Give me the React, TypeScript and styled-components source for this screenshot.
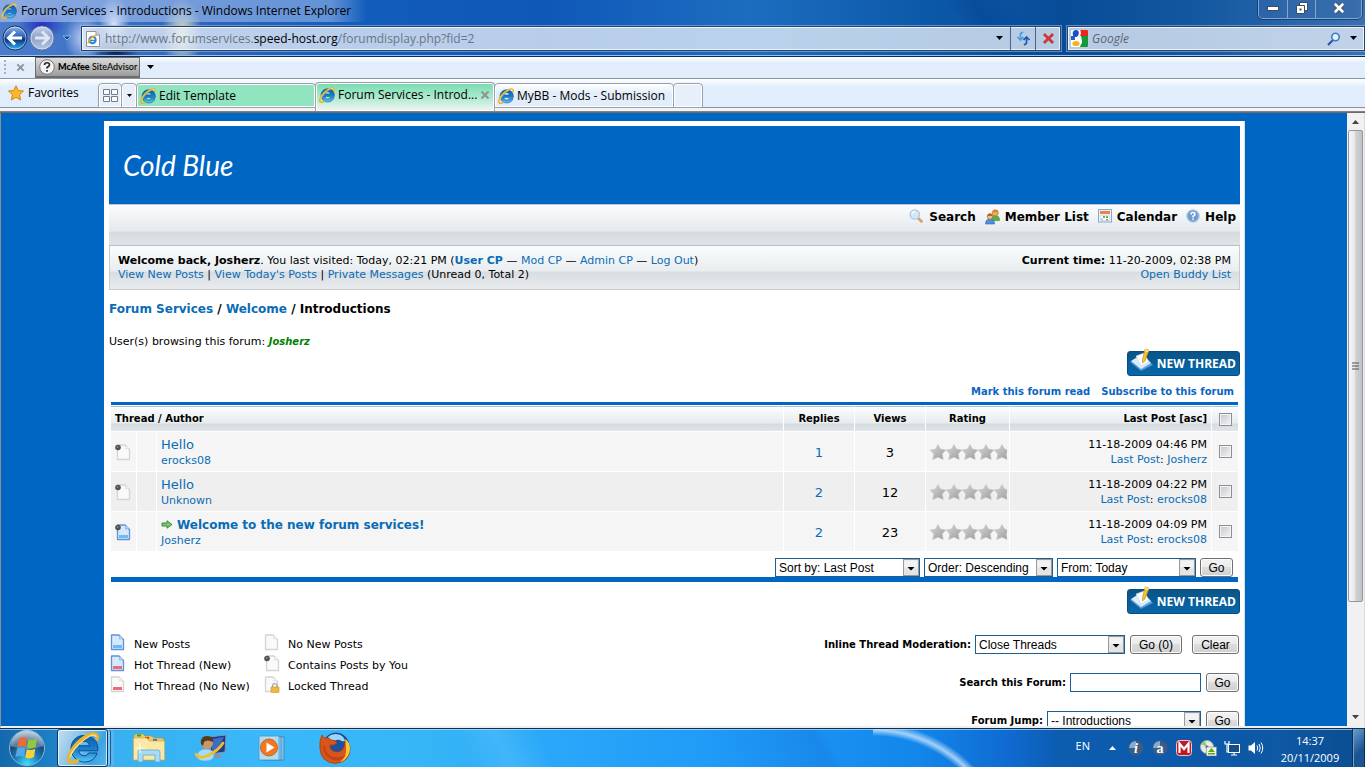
import React, { ReactNode } from "react";
import styled, { createGlobalStyle, css } from "styled-components";

const verdana = `"DejaVu Sans", Verdana, sans-serif`;
const segoe = `"Open Sans", "Noto Sans", "Segoe UI", sans-serif`;
const arial = `"Liberation Sans", Arial, sans-serif`;
const link = "#0a6cb5";
const brand = "#0066c4";

const Global = createGlobalStyle`
  * { box-sizing: border-box; }
  body { margin: 0; overflow: hidden; background: ${brand}; }
  button, input, select { font: inherit; color: inherit; margin: 0; }
  svg { display: block; flex: none; }
`;

/* ---------- browser window ---------- */

const Desktop = styled.div`
  height: 100vh;
  display: flex;
  flex-direction: column;
  overflow: hidden;
  font: 12px/16px ${segoe};
  color: #000;
`;

const Glass = styled.header`
  flex: none;
  border-bottom: 1px solid #0b2a5c;
  background:
    radial-gradient(ellipse 24px 14px at 42px 25px, rgba(30, 40, 190, 0.9), transparent),
    radial-gradient(ellipse 20px 24px at 84px 38px, rgba(225, 232, 255, 0.8), transparent),
    radial-gradient(ellipse 16px 26px at 114px 22px, rgba(240, 244, 255, 0.9), transparent),
    radial-gradient(ellipse 24px 12px at 116px 51px, rgba(5, 16, 50, 0.95), transparent),
    radial-gradient(ellipse 20px 36px at 182px 34px, rgba(245, 242, 190, 0.95), transparent),
    linear-gradient(52deg, transparent 70%, rgba(0, 60, 140, 0.3) 72%, transparent 75%),
    linear-gradient(90deg, #4c7cca 0, #2c66c0 200px, #125cbc 360px, #1058b8 40%, #1c6dc0 55%, #0c58a8 68%, #084c98 78%, #1458a0 88%, #3a70b0 100%);
`;

const TitleBar = styled.div`
  display: flex;
  align-items: center;
  justify-content: space-between;
  height: 22px;
`;

const WindowTitle = styled.div`
  display: flex;
  align-items: center;
  gap: 4px;
  height: 22px;
  padding: 0 16px 0 1px;
  background: linear-gradient(90deg, rgba(190, 208, 245, 0.55), rgba(160, 190, 235, 0.55) 90%, transparent);
`;

const Caption = styled.div`
  display: flex;
  align-self: flex-start;
  height: 19px;
  margin-right: 3px;
  border: 1px solid #7fa7d2;
  border-top: 0;
  border-radius: 0 0 5px 5px;
  box-shadow: 0 0 0 1px rgba(10, 40, 90, 0.6);
  overflow: hidden;
`;

const CaptionButton = styled.button<{ $wide?: boolean }>`
  width: ${(p) => (p.$wide ? 46 : 28)}px;
  display: grid;
  place-items: center;
  padding: 0 0 3px;
  border: 0;
  background: rgba(60, 110, 170, 0.35);
  & + & { border-left: 1px solid #7fa7d2; }
`;

const NavBar = styled.div`
  display: flex;
  align-items: center;
  height: 34px;
  padding: 0 0 1px 2px;
  border-bottom: 1px solid #9cc0e8;
`;

const Bare = styled.button`
  display: grid;
  place-items: center;
  padding: 0;
  border: 0;
  background: none;
`;

const RecentButton = styled(Bare)`
  width: 22px;
`;

const Field = styled.div<{ $search?: boolean }>`
  flex: ${(p) => (p.$search ? "0 1 298px" : "1 1 0")};
  height: 25px;
  margin-top: 1px;
  margin-left: ${(p) => (p.$search ? 6 : 3)}px;
  display: flex;
  align-items: center;
  border: 1px solid #24436f;
  outline: 1px solid rgba(150, 185, 225, 0.6);
  box-shadow: inset 0 0 0 1px rgba(255, 255, 255, 0.75);
  background: rgba(226, 235, 246, 0.8);
`;

const FieldIcon = styled.span`
  padding: 0 4px 0 3px;
`;

const Address = styled.div`
  flex: 1;
  color: #6b7684;
  b { color: #000; font-weight: 400; }
`;

const SearchBox = styled.input`
  flex: 1;
  min-width: 0;
  padding: 0;
  border: 0;
  background: none;
  font-style: italic;
  &::placeholder { color: #5d6672; opacity: 1; }
`;

const FieldButton = styled(Bare)<{ $divided?: boolean }>`
  width: ${(p) => (p.$divided ? 25 : 20)}px;
  height: 23px;
  border-left: ${(p) => (p.$divided ? "1px solid #4a6488" : "0")};
`;

const ToolBar = styled.div`
  flex: none;
  height: 22px;
  display: flex;
  align-items: stretch;
  padding-left: 4px;
  border-bottom: 1px solid #8a93a2;
  background: linear-gradient(#fff, #e1edfa 30%);
`;

const Grip = styled.span`
  width: 2px;
  margin: 3px 0 2px;
  background: repeating-linear-gradient(#a9b0ba 0 2px, transparent 2px 4px);
`;

const ToolClose = styled(Bare)`
  width: 29px;
`;

const Advisor = styled.button`
  display: flex;
  align-items: center;
  gap: 3px;
  width: 105px;
  padding: 0 0 0 3px;
  border: 1px solid #6d6d6d;
  border-bottom-width: 2px;
  background: linear-gradient(#dcdcdc, #9b9b9b);
  font: 500 9px/12px Lato, "Open Sans", sans-serif;
  white-space: nowrap;
  b { font-weight: 900; }
`;

const TabStrip = styled.div`
  flex: none;
  display: flex;
  height: 34px;
  align-items: flex-start;
  padding-top: 3px;
  background: linear-gradient(#fff 0, #e1edfa 8px, #e1edfa 28px, #8a93a2 28px, #8a93a2 29px, #f0f2f5 29px, #f4f4f4 32px, #8e8e8e 32px, #5e5e5e 34px);
`;

const Favorites = styled.button`
  display: flex;
  align-items: center;
  gap: 4px;
  width: 98px;
  height: 22px;
  padding: 0 0 0 8px;
  border: 0;
  background: none;
`;

const tabFrame = css`
  border: 1px solid #98a0ac;
  border-radius: 4px 4px 0 0;
  box-shadow: inset 0 0 0 1px #fff;
`;

const QuickTab = styled.button<{ $width: number }>`
  ${tabFrame}
  width: ${(p) => p.$width}px;
  height: 25px;
  margin-top: 1px;
  margin-right: -1px;
  padding: 0;
  display: grid;
  place-items: center;
  background: #e6effa;
`;

const Tab = styled.div<{ $active?: boolean; $tone: string }>`
  ${tabFrame}
  display: flex;
  align-items: center;
  gap: 3px;
  width: 180px;
  height: ${(p) => (p.$active ? 29 : 25)}px;
  margin-top: ${(p) => (p.$active ? 0 : 1)}px;
  margin-right: -1px;
  padding: ${(p) => (p.$active ? "0 7px 4px 3px" : "0 4px 0 3px")};
  border-bottom-width: ${(p) => (p.$active ? 0 : 1)}px;
  background: ${(p) => p.$tone};
  white-space: nowrap;
  span { flex: 1; }
`;

/* ---------- page viewport ---------- */

const Viewport = styled.div`
  flex: 1;
  min-height: 0;
  display: flex;
  border-left: 1px solid #8e8e8e;
  border-right: 1px solid #d8dce4;
  border-bottom: 2px solid #efefef;
  background: ${brand};
`;

const Page = styled.main`
  flex: 1;
  min-width: 0;
  overflow: hidden;
  padding: 8px 102px 0 103px;
  background: ${brand};
  font: 11px/14px ${verdana};
`;

const Container = styled.div`
  padding: 5px 4px 5px 5px;
  border-right: 1px solid #ddd;
  background: #fff;
`;

const Banner = styled.h1`
  height: 78px;
  margin: 0;
  padding: 0 14px;
  display: flex;
  align-items: center;
  background: ${brand};
  color: #fff;
  font: italic 28px/36px Lato, "Open Sans", sans-serif;
`;

const A = styled.a`
  color: ${link};
  text-decoration: none;
`;

const MenuBar = styled.nav`
  display: flex;
  justify-content: flex-end;
  gap: 9px;
  height: 42px;
  padding: 4px 4px 0 0;
  border-top: 1px solid #b9c6d2;
  border-bottom: 1px solid #b5bfc9;
  background: linear-gradient(#fbfcfd, #e6eaed 26px, #d6dbe0 27px, #e0e4e9);
`;

const MenuLink = styled.a`
  display: flex;
  align-items: flex-start;
  gap: 5px;
  color: #000;
  font-weight: 700;
  font-size: 12px;
  line-height: 16px;
  text-decoration: none;
`;

const Welcome = styled.section`
  display: flex;
  justify-content: space-between;
  padding: 8px 8px 7px;
  border: 1px solid #c8cbce;
  border-top: 0;
  background: linear-gradient(#fafcfd, #e9edef 25px, #d8dde1 26px, #e9ecef);
  p { margin: 0; }
`;

const Right = styled.div`
  text-align: right;
`;

const Crumbs = styled.nav`
  margin-top: 11px;
  font-size: 12px;
  font-weight: 700;
  line-height: 16px;
`;

const Browsing = styled.p`
  margin: 18px 0 0;
  i { color: #008000; font-weight: 700; font-size: 10px; }
`;

const ActionRow = styled.div<{ $top: number }>`
  display: flex;
  justify-content: flex-end;
  padding-top: ${(p) => p.$top}px;
`;

const NewThreadLink = styled.a`
  position: relative;
  display: flex;
  align-items: center;
  justify-content: flex-end;
  width: 113px;
  height: 25px;
  margin: 2px 0 1px;
  padding-right: 3px;
  border-radius: 3px;
  background: linear-gradient(#0a5486, #0668ac);
  border: 1px solid #0b4c7c;
  color: #fff;
  font: 700 12px/16px "Open Sans", Lato, sans-serif;
  text-decoration: none;
  svg { position: absolute; left: 1px; top: -4px; }
`;

const ForumLinks = styled.div`
  display: flex;
  justify-content: flex-end;
  gap: 11px;
  padding: 8px 6px 3px 0;
  font-weight: 700;
  font-size: 10px;
  a { color: #0a66c2; }
`;

const ThreadBox = styled.div`
  margin: 0 2px;
  border-top: 3px solid ${brand};
  border-bottom: 5px solid ${brand};
`;

const Threads = styled.table`
  width: 100%;
  margin-top: 1px;
  border-spacing: 0;
  table-layout: fixed;
`;

const Th = styled.th<{ $align?: string }>`
  height: 26px;
  padding: 0 4px;
  font-size: 10px;
  text-align: ${(p) => p.$align || "center"};
  border-top: 1px solid #b4c0cf;
  border-right: 1px solid #fff;
  border-bottom: 1px solid #fff;
  background: linear-gradient(#fafcfd, #e8ecee 16px, #d5dce0 17px, #e0e5ea);
  &:last-child { border-right: 0; padding: 0; }
`;

const Td = styled.td<{ $align?: string; $big?: boolean }>`
  height: 40px;
  padding: 1px 4px 0;
  text-align: ${(p) => p.$align || "center"};
  font-size: ${(p) => (p.$big ? 13 : 11)}px;
  line-height: 15px;
  border-right: 1px solid #fff;
  border-bottom: 1px solid #fff;
  &:last-child { border-right: 0; padding: 0; }
`;

const Tr = styled.tr<{ $alt: boolean }>`
  background: ${(p) => (p.$alt ? "#efefef" : "#f5f5f5")};
`;

const Subject = styled.div<{ $unread: boolean }>`
  display: flex;
  align-items: center;
  gap: 4px;
  font-size: ${(p) => (p.$unread ? 12 : 13)}px;
  line-height: 16px;
  font-weight: ${(p) => (p.$unread ? 700 : 400)};
`;

const Tick = styled.input`
  appearance: none;
  display: block;
  width: 13px;
  height: 13px;
  margin: 0 auto;
  border: 1px solid #8e8f8f;
  background: linear-gradient(135deg, #c3c8ce, #f5f6f7);
  background-clip: content-box;
  padding: 1px;
  box-shadow: inset 0 0 0 1px #f4f4f4;
`;

const SortBar = styled.form`
  display: flex;
  justify-content: flex-end;
  align-items: flex-end;
  gap: 4px;
  height: 25px;
  padding-right: 5px;
`;

const SelectBox = styled.span<{ $width: number }>`
  position: relative;
  display: inline-flex;
  width: ${(p) => p.$width}px;
  height: 19px;
  svg { position: absolute; right: 1px; top: 1px; pointer-events: none; }
`;

const NativeSelect = styled.select`
  appearance: none;
  width: 100%;
  padding: 0 18px 0 3px;
  border: 1px solid #1f5f8f;
  border-radius: 0;
  background: #fff;
  font: 12px/16px ${arial};
`;

const TextInput = styled.input`
  width: 131px;
  height: 19px;
  padding: 0 3px;
  border: 1px solid #1f5f8f;
  background: #fff;
  font: 12px/16px ${arial};
`;

const Push = styled.button<{ $width: number; $gap?: number }>`
  width: ${(p) => p.$width}px;
  height: 19px;
  margin-left: ${(p) => p.$gap || 0}px;
  padding: 1px 0 0;
  border: 1px solid #707070;
  border-radius: 3px;
  box-shadow: inset 0 0 0 1px #fcfcfc;
  background: linear-gradient(#f2f2f2, #ebebeb 50%, #dddddd 50%, #cfcfcf);
  font: 12px/14px ${arial};
`;

const Bottom = styled.div`
  display: flex;
  justify-content: space-between;
  align-items: flex-start;
  padding: 19px 1px 30px 1px;
`;

const Legend = styled.ul`
  display: grid;
  grid-template-columns: 154px auto;
  margin: 0;
  padding: 0;
  list-style: none;
`;

const LegendItem = styled.li`
  display: flex;
  align-items: flex-start;
  gap: 8px;
  height: 21px;
  span { margin-top: 4px; }
`;

const Tools = styled.div`
  display: flex;
  flex-direction: column;
  align-items: flex-end;
  gap: 19px;
  padding-top: 1px;
`;

const ToolForm = styled.form`
  display: flex;
  align-items: center;
  gap: 5px;
  label { font-weight: 700; font-size: 10px; margin-right: -1px; }
`;

const Scroll = styled.div`
  flex: none;
  width: 17px;
  display: flex;
  flex-direction: column;
  background: #f1f1f1;
`;

const ScrollArrow = styled(Bare)`
  height: 17px;
`;

const Thumb = styled.div`
  flex: 0 0 77%;
  display: grid;
  place-items: center;
  margin: 0 1px;
  border: 1px solid #979797;
  border-radius: 2px;
  background: linear-gradient(90deg, #f5f5f5, #e9e9eb 45%, #d2d3d6 50%, #c0c1c6);
`;

const Rest = styled.div`
  flex: 1;
`;

/* ---------- taskbar ---------- */

const TaskBar = styled.footer`
  flex: none;
  display: flex;
  align-items: stretch;
  height: 39px;
  border-top: 1px solid #12304e;
  box-shadow: inset 0 1px 0 rgba(190, 225, 255, 0.7);
  background:
    radial-gradient(circle at 0 134px, transparent 127px, rgba(200, 228, 255, 0.8) 133px, transparent 140px) 64.500% 0 / 120px 39px no-repeat,
    linear-gradient(62deg, transparent 34%, rgba(120, 210, 255, 0.25) 37%, transparent 40%, transparent 52%, rgba(20, 110, 210, 0.25) 60%, transparent 61%),
    linear-gradient(90deg, #1468ac 0, #1f82c8 56px, #36b0f0 110px, #3ab8fa 260px, #36b6f6 420px, #2aa6fa 560px, #1c96f6 780px, #1286ea 920px, #0f6ad0 1010px, #0c5cb0 1060px, #0e58a4 1280px, #0a4c90 100%);
  background-position: calc(100% - 372px) 0, 0 0, 0 0;
`;

const StartButton = styled(Bare)`
  width: 54px;
`;

const RunningApp = styled.button`
  display: grid;
  place-items: center;
  width: 51px;
  margin: 0 10px 0 3px;
  padding: 0;
  border: 1px solid #0b3a66;
  border-radius: 3px;
  box-shadow: inset 0 0 0 1px rgba(255, 255, 255, 0.7), 3px 0 0 -1px #7cc8f4, 4px 0 0 -1px #1b5c92, 7px 0 0 -1px #58b4ec;
  background: linear-gradient(115deg, #c4dff2, #7dbde6 45%, #3fa3e0 75%, #58b6ee);
`;

const PinnedApp = styled(Bare)`
  width: 62px;
`;

const Tray = styled.div`
  margin-left: auto;
  display: flex;
  align-items: center;
  color: #fff;
`;

const Lang = styled.span`
  margin: -4px 10px 0 0;
  font-size: 11px;
`;

const TrayIcon = styled(Bare)<{ $width?: number }>`
  width: ${(p) => p.$width || 24}px;
`;

const Clock = styled.time`
  width: 84px;
  padding-top: 2px;
  text-align: center;
  font-size: 11px;
  line-height: 17px;
`;

const PeekButton = styled.button`
  width: 13px;
  align-self: stretch;
  padding: 0;
  border: 1px solid #0b2f58;
  border-width: 0 1px;
  box-shadow: inset 1px 0 0 #6d9fd0;
  background: linear-gradient(135deg, #6f9fcc, #1c5492 60%);
`;

/* ---------- icons ---------- */

function IeLogo({ size = 16 }: { size?: number }) {
  return (
    <svg width={size} height={size} viewBox="0 0 32 32" aria-hidden="true">
      <defs>
        <linearGradient id="ie-blue" x1="0" y1="0" x2="0" y2="1">
          <stop offset="0" stopColor="#0d5cb0" />
          <stop offset="0.6" stopColor="#1c86d4" />
          <stop offset="1" stopColor="#58c8f8" />
        </linearGradient>
      </defs>
      <path
        d="M17 3.500C9 3.500 4 9.500 4 16.500C4 24 10 30 17.500 30C24 30 28.500 26.500 30 21H21.500C20.500 23 19.500 23.800 17.500 23.800C14 23.800 12 21.500 11.800 18.800H30.700C31.500 9.500 26 3.500 17 3.500ZM12 13.800C12.500 11 14.600 9.300 17.300 9.300C20.200 9.300 22.200 11 22.600 13.800Z"
        fill="url(#ie-blue)"
        stroke="#0b4a8c"
        strokeWidth="1"
      />
      <path d="M30 7C31.500 3 28 0.800 23 2.500C13 6 4 17 1.800 25C0.500 31 5 32 10.500 28.500" fill="none" stroke="#f0b422" strokeWidth="3.200" strokeLinecap="round" />
      <path d="M29 5C28.500 2.800 26 2.700 23 4C15 8 6 17 3 25" fill="none" stroke="#ffe58a" strokeWidth="1.200" />
    </svg>
  );
}

function Arrow({ color = "#000" }: { color?: string }) {
  return (
    <svg width="8" height="5" viewBox="0 0 8 5" aria-hidden="true">
      <path d="M0 0H7L3.500 4Z" fill={color} />
    </svg>
  );
}

function RoundArrow({ back }: { back?: boolean }) {
  return (
    <svg width={back ? 26 : 28} height="26" viewBox="0 0 26 26" aria-hidden="true">
      <defs>
        <linearGradient id="nav-back" x1="0" y1="0" x2="0" y2="1">
          <stop offset="0" stopColor="#8fb8e8" />
          <stop offset="0.450" stopColor="#2a62b8" />
          <stop offset="0.550" stopColor="#0c2f80" />
          <stop offset="1" stopColor="#35b8f8" />
        </linearGradient>
        <linearGradient id="nav-fwd" x1="0" y1="0" x2="0" y2="1">
          <stop offset="0" stopColor="#c4d0e8" />
          <stop offset="0.500" stopColor="#8ea4cc" />
          <stop offset="1" stopColor="#b4c4de" />
        </linearGradient>
      </defs>
      <circle cx="13" cy="13" r="12" fill={back ? "url(#nav-back)" : "url(#nav-fwd)"} stroke={back ? "#16305e" : "#5f76a0"} />
      <circle cx="13" cy="13" r="11" fill="none" stroke="#fff" strokeOpacity="0.500" />
      <path
        d={back ? "M13 6.500L6.500 13L13 19.500M7 13H20" : "M13 6.500L19.500 13L13 19.500M19 13H6"}
        fill="none"
        stroke={back ? "#fff" : "#dfe6f2"}
        strokeWidth="3"
      />
    </svg>
  );
}

function PageIe() {
  return (
    <svg width="16" height="18" viewBox="0 0 16 18" aria-hidden="true">
      <path d="M1.500 1.500H11L14.500 5V16.500H1.500Z" fill="#fff" stroke="#8b93a0" />
      <path d="M11 1.500V5H14.500" fill="#dde3ec" stroke="#8b93a0" />
      <circle cx="7.500" cy="10" r="3.200" fill="none" stroke="#2a86d8" strokeWidth="2" />
      <path d="M5 10.500H11" stroke="#2a86d8" strokeWidth="1.500" />
      <path d="M12 5.500C9 5 4 9 3 13.500" stroke="#f0b422" strokeWidth="1.500" fill="none" />
    </svg>
  );
}

function GoogleMark() {
  return (
    <svg width="17" height="17" viewBox="0 0 17 17" aria-hidden="true">
      <rect width="17" height="17" rx="1" fill="#fff" />
      <path d="M9 0H16Q17 0 17 1V6H9Z" fill="#e8261c" />
      <path d="M10 6H17V16Q17 17 16 17H9L11 11Z" fill="#149a3c" />
      <path d="M0 6H4V10H0Z" fill="#2a58c8" />
      <ellipse cx="5" cy="3.500" rx="3.300" ry="3.500" fill="#1d4fc0" />
      <path d="M8 0C10 3 8 7 6 8C10 9 11 12 9 14" fill="none" stroke="#fff" strokeWidth="2" />
      <ellipse cx="5" cy="13.500" rx="3.600" ry="2.600" fill="#f4b41a" />
    </svg>
  );
}

function Cross({ size = 10, color = "#8e949c", edge }: { size?: number; color?: string; edge?: string }) {
  return (
    <svg width={size} height={size} viewBox="0 0 10 10" aria-hidden="true">
      {edge && <path d="M1.500 1.500L8.500 8.500M8.500 1.500L1.500 8.500" stroke={edge} strokeWidth="3.600" />}
      <path d="M1.500 1.500L8.500 8.500M8.500 1.500L1.500 8.500" stroke={color} strokeWidth="2.200" />
    </svg>
  );
}

type Tone = "blue" | "grey";
function Doc({ tone, band, dot, lock }: { tone: Tone; band?: string; dot?: boolean; lock?: boolean }) {
  const edge = tone === "blue" ? "#5f93dc" : "#d4d4d4";
  return (
    <svg width="16" height="17" viewBox="0 0 16 17" aria-hidden="true">
      <path d="M1.500 1H9L13.500 5.500V15.500H1.500Z" transform={dot ? "translate(1 0)" : undefined} fill={tone === "blue" ? "#d6e8fc" : "#fafafa"} stroke={edge} strokeWidth="1.300" strokeLinejoin="round" />
      <path d="M9 1Q11 3 9.500 5Q11.500 4 13.500 5.500" transform={dot ? "translate(1 0)" : undefined} fill="#fff" stroke={edge} strokeWidth="0.700" />
      {band && <rect x={dot ? 4 : 3} y="11" width="9" height="3" fill={band} />}
      {dot && <circle cx="3" cy="3.500" r="2.800" fill="#505050" />}
      {dot && <circle cx="2.600" cy="3" r="1" fill="#888" />}
      {lock && (
        <>
          <path d="M8.500 12V9.500A2.300 2.300 0 0 1 13 9.500V12" fill="none" stroke="#a8a8a8" strokeWidth="1.300" />
          <rect x="7" y="11" width="8" height="5.500" rx="0.500" fill="#f0b840" stroke="#c89028" strokeWidth="0.600" />
        </>
      )}
    </svg>
  );
}

function Stars() {
  const star = "M8 0.500L10.500 5L15.800 6L12.200 10L13.300 15.500L8 13.300L2.700 15.500L3.800 10L0.200 6L5.500 5Z";
  return (
    <svg width="77" height="16" viewBox="0 0 77 16" role="img" aria-label="Not rated">
      <defs>
        <linearGradient id="star-fill" x1="0" y1="0" x2="1" y2="1">
          <stop offset="0" stopColor="#d6d6d6" />
          <stop offset="1" stopColor="#9c9c9c" />
        </linearGradient>
      </defs>
      {[0, 16, 32, 48, 64].map((x) => (
        <path key={x} d={star} transform={`translate(${x} 0)`} fill="url(#star-fill)" stroke="#c0c0c0" strokeWidth="0.500" />
      ))}
    </svg>
  );
}

function SearchGlyph() {
  return (
    <svg width="15" height="15" viewBox="0 0 15 15" aria-hidden="true">
      <path d="M9 9L12.500 12.500" stroke="#d8a060" strokeWidth="2.600" strokeLinecap="round" />
      <circle cx="5.800" cy="5.500" r="4.600" fill="#d2e8fa" stroke="#b4c6dc" strokeWidth="1.400" />
      <path d="M3 5A3 3 0 0 1 6 2.600" stroke="#fff" strokeWidth="1.200" fill="none" />
    </svg>
  );
}

function MembersGlyph() {
  return (
    <svg width="15" height="16" viewBox="0 0 15 16" aria-hidden="true">
      <path d="M6.500 11.500Q6.500 6.500 10.500 6.500T14.500 11.500Z" fill="#5cb048" stroke="#3a8a2c" strokeWidth="0.600" />
      <circle cx="10.300" cy="3.800" r="3" fill="#f0b068" stroke="#c07828" strokeWidth="0.700" />
      <path d="M7.300 3.500Q8 0.500 10.500 0.700T13.300 3.500Q10 3.200 7.300 3.500Z" fill="#d88a28" />
      <path d="M0.500 15Q0.500 10 5 10T9.500 15Z" fill="#4f90dc" stroke="#2c64b0" strokeWidth="0.600" />
      <circle cx="5" cy="7.500" r="2.800" fill="#f4c08a" stroke="#a86a30" strokeWidth="0.700" />
      <path d="M2.200 7.200Q2.500 4.600 5 4.600T7.800 7.200Q5 6.300 2.200 7.200Z" fill="#a8642c" />
    </svg>
  );
}

function CalendarGlyph() {
  return (
    <svg width="14" height="14" viewBox="0 0 14 14" aria-hidden="true">
      <rect x="0.500" y="0.500" width="13" height="12.500" fill="#e8f0fa" stroke="#8aa8d0" />
      <rect x="2" y="2" width="10" height="3" fill="#f08048" />
      <path d="M2.500 6.500H11.500V11.500H2.500Z" fill="#fff" stroke="#c0d0e0" strokeWidth="0.500" />
      <path d="M5 7H7V9H5ZM8 7H10V9H8ZM8 10H10V11.500H8Z" fill="#6cb050" />
      <path d="M3 9.500H5V11.500H3Z" fill="#b0c4dc" />
    </svg>
  );
}

function HelpGlyph() {
  return (
    <svg width="14" height="14" viewBox="0 0 14 14" aria-hidden="true">
      <circle cx="7" cy="7" r="6.300" fill="#8db0dc" stroke="#b8cce6" />
      <circle cx="7" cy="7" r="5" fill="#6f9ad0" />
      <path d="M5 5.500Q5 3.500 7 3.500T9 5.300Q9 6.500 7 7.300V8.500M7 9.500V11" fill="none" stroke="#fff" strokeWidth="1.500" />
    </svg>
  );
}

function NotePad() {
  return (
    <svg width="26" height="26" viewBox="0 0 26 26" aria-hidden="true">
      <path d="M1 14L14 7L24 17L12 23Z" fill="#5aa0e0" stroke="#2a6cb4" strokeWidth="0.600" />
      <path d="M2 13L13 6L22 15L12 21Z" fill="#d8ecfc" />
      <path d="M7 8L15 5L20 14L12 18Z" fill="#fff" stroke="#b4cce4" strokeWidth="0.500" />
      <path d="M16 1L20 2L16 13L13.500 15L13.500 11.500Z" fill="#f4c22c" stroke="#c08a14" strokeWidth="0.600" />
      <path d="M16 1L20 2L19.300 4.200L15.200 3.200Z" fill="#f8dc80" />
    </svg>
  );
}

function SelectArrow() {
  return (
    <svg width="16" height="17" viewBox="0 0 16 17" aria-hidden="true">
      <rect x="0.500" y="0.500" width="15" height="16" fill="#e4e4e4" stroke="#9a9a9a" />
      <rect x="1.500" y="1.500" width="13" height="7" fill="#f2f2f2" />
      <path d="M4.500 8H11.500L8 11.500Z" fill="#000" />
    </svg>
  );
}

function WindowsOrb() {
  return (
    <svg width="38" height="38" viewBox="0 0 38 38" aria-hidden="true">
      <defs>
        <radialGradient id="orb" cx="0.500" cy="0.950" r="0.900">
          <stop offset="0" stopColor="#3fe0fc" />
          <stop offset="0.400" stopColor="#1c7cb8" />
          <stop offset="0.700" stopColor="#1a4a78" />
          <stop offset="1" stopColor="#9fb8cc" />
        </radialGradient>
      </defs>
      <circle cx="19" cy="19" r="17.500" fill="url(#orb)" stroke="#7fb8dc" />
      <path d="M3 17A16 16 0 0 1 35 17Q19 23 3 17Z" fill="#fff" opacity="0.280" />
      <path d="M11 9.500Q15 7 19 9.500L17.500 18Q13.500 16 9.500 18Z" fill="#ee6a34" />
      <path d="M20.500 10Q24.500 12 29 9.500L27.500 18Q23.500 20.500 19 18.500Z" fill="#94c83c" />
      <path d="M9 19.500Q13 17.500 17.300 19.800L16 28Q12 26 7.500 28Z" fill="#54a8e8" />
      <path d="M18.700 20.200Q23 22 27.300 19.800L26 28Q22 30.500 17.300 28.500Z" fill="#fcd038" />
    </svg>
  );
}

function Folder() {
  return (
    <svg width="34" height="30" viewBox="0 0 34 30" aria-hidden="true">
      <path d="M2 3Q2 1 4 1H11L13 3H20L22 5H30Q32 5 32 7V27H2Z" fill="#e8c868" stroke="#b8923c" strokeWidth="0.700" />
      <path d="M5 1.500H9V3.500H5Z" fill="#20a838" />
      <path d="M13 4H17V6H13Z" fill="#d84020" />
      <path d="M21 6H25V8H21Z" fill="#2a80e0" />
      <path d="M1.500 5H15L17 8H32.500V27H1.500Z" fill="#fae8a4" stroke="#d0ac54" strokeWidth="0.700" />
      <path d="M6 29V19Q6 17 8 17H26Q28 17 28 19V29H23V22H11V29Z" fill="#a8dcf4" stroke="#5aa8d4" strokeWidth="0.800" />
      <path d="M8 10V20M3 15H13" stroke="#fff" strokeWidth="1.200" opacity="0.800" />
    </svg>
  );
}

function Messenger() {
  return (
    <svg width="32" height="28" viewBox="0 0 32 28" aria-hidden="true">
      <path d="M14 3L31 1L30 18L16 20Z" fill="#1c3c84" stroke="#8494ac" strokeWidth="1" />
      <path d="M16 5L29 3L22 17L17 18Z" fill="#3c6cc4" />
      <path d="M19 24H27L25 20H21Z" fill="#8494ac" />
      <circle cx="12" cy="9" r="6" fill="#c89868" />
      <path d="M6 10Q5 2 12 2T18 8Q12 5 9 8L8 12Z" fill="#54391c" />
      <path d="M2 22Q3 15 11 15T19 22Q18 27 10 27T2 22Z" fill="#a8dcf4" stroke="#5aa8d4" strokeWidth="0.600" />
      <path d="M1 20Q4 26 14 21T28 9" fill="none" stroke="#f0c02c" strokeWidth="2.600" strokeLinecap="round" />
    </svg>
  );
}

function MediaPlayer() {
  return (
    <svg width="30" height="26" viewBox="0 0 30 26" aria-hidden="true">
      <path d="M6 2H26V25H6Z" fill="#7cc4ec" stroke="#3c84bc" strokeWidth="0.800" />
      <path d="M4 1.500H23V25H4Z" fill="#94d0f0" stroke="#3c84bc" strokeWidth="0.800" />
      <path d="M1 1H21V25H1Z" fill="#b0dcf4" stroke="#4c94c8" strokeWidth="0.800" />
      <circle cx="11" cy="12.500" r="8.500" fill="#f07820" stroke="#c85808" strokeWidth="0.800" />
      <path d="M8.500 7.500L16.500 12.500L8.500 17.500Z" fill="#fff" />
    </svg>
  );
}

function Firefox() {
  return (
    <svg width="34" height="34" viewBox="0 0 34 34" aria-hidden="true">
      <circle cx="18" cy="15" r="13" fill="#1c50a0" stroke="#143c7c" strokeWidth="0.800" />
      <path d="M10 6Q14 2 21 3.500Q26 5 27 10Q24 11 22 9Q17 8 15 12Q11 10 10 6Z" fill="#a0d4f4" />
      <path d="M4 4Q5 7 8 7Q11 6 13 9Q18 9 19 12Q16 15 12 14Q11 18 15 20Q19 22 23 20Q27 17 27 10Q31 11 32 16Q33 31 17 32.500Q3 31 2 18Q1 10 4 4Z" fill="#d8561c" stroke="#a83c0c" strokeWidth="0.800" />
      <path d="M27 8Q31 10 32 16Q32.500 27 22 31.500Q29 25 28 17Q28 12 27 8Z" fill="#f8c838" />
      <path d="M5 16Q5 25 15 29Q24 31 28 24Q20 28 13 25Q7 22 7 14Z" fill="#b83c14" opacity="0.700" />
    </svg>
  );
}

function LetterBall({ letter, italic }: { letter: string; italic?: boolean }) {
  return (
    <svg width="16" height="16" viewBox="0 0 16 16" aria-hidden="true">
      <circle cx="8" cy="8" r="7.500" fill="#3c5c84" />
      <path d="M1 8A7 7 0 0 1 8 1V8Z" fill="#8ca8c8" />
      <text x="8" y="13" textAnchor="middle" fontFamily="Liberation Serif" fontWeight="700" fontStyle={italic ? "italic" : "normal"} fontSize="14" fill="#fff">{letter}</text>
    </svg>
  );
}

/* ---------- building blocks ---------- */

function Select({ id, label, value, width }: { id: string; label: string; value: string; width: number }) {
  return (
    <SelectBox $width={width}>
      <NativeSelect id={id} aria-label={label} defaultValue={value}>
        <option>{value}</option>
      </NativeSelect>
      <SelectArrow />
    </SelectBox>
  );
}

function NewThread() {
  return (
    <NewThreadLink href="#new-thread">
      <NotePad />
      NEW THREAD
    </NewThreadLink>
  );
}

const menu: { label: string; icon: ReactNode }[] = [
  { label: "Search", icon: <SearchGlyph /> },
  { label: "Member List", icon: <MembersGlyph /> },
  { label: "Calendar", icon: <CalendarGlyph /> },
  { label: "Help", icon: <HelpGlyph /> },
];

const threads = [
  { title: "Hello", author: "erocks08", replies: 1, views: 3, date: "11-18-2009 04:46 PM", last: "Josherz", unread: false },
  { title: "Hello", author: "Unknown", replies: 2, views: 12, date: "11-18-2009 04:22 PM", last: "erocks08", unread: false },
  { title: "Welcome to the new forum services!", author: "Josherz", replies: 2, views: 23, date: "11-18-2009 04:09 PM", last: "erocks08", unread: true },
];

const legend: { label: string; icon: ReactNode }[] = [
  { label: "New Posts", icon: <Doc tone="blue" band="#6cbcf0" /> },
  { label: "No New Posts", icon: <Doc tone="grey" /> },
  { label: "Hot Thread (New)", icon: <Doc tone="blue" band="#f06c74" /> },
  { label: "Contains Posts by You", icon: <Doc tone="grey" dot /> },
  { label: "Hot Thread (No New)", icon: <Doc tone="grey" band="#f06c74" /> },
  { label: "Locked Thread", icon: <Doc tone="grey" lock /> },
];

function BrowserChrome() {
  return (
    <>
      <Glass>
        <TitleBar>
          <WindowTitle>
            <IeLogo />
            Forum Services - Introductions - Windows Internet Explorer
          </WindowTitle>
          <Caption>
            <CaptionButton aria-label="Minimize">
              <svg width="12" height="6" viewBox="0 0 12 6"><rect x="0.500" y="1.500" width="11" height="4" fill="#fff" stroke="#3c4c64" /></svg>
            </CaptionButton>
            <CaptionButton aria-label="Restore">
              <svg width="12" height="12" viewBox="0 0 12 12">
                <path d="M3.500 0.500H11.500V8.500H3.500Z" fill="#fff" stroke="#3c4c64" />
                <path d="M0.500 3.500H8.500V11.500H0.500Z" fill="#fff" stroke="#3c4c64" />
                <path d="M3.500 6.500H5.500V8.500H3.500Z" fill="#3c4c64" />
              </svg>
            </CaptionButton>
            <CaptionButton aria-label="Close" $wide><Cross size={12} color="#fff" edge="#3c4c64" /></CaptionButton>
          </Caption>
        </TitleBar>
        <NavBar>
          <Bare aria-label="Back"><RoundArrow back /></Bare>
          <Bare aria-label="Forward"><RoundArrow /></Bare>
          <RecentButton aria-label="Recent pages">
            <svg width="10" height="6" viewBox="0 0 10 6"><path d="M1 1H9L5 5Z" fill="#16407c" stroke="#7cc0f0" /></svg>
          </RecentButton>
          <Field>
            <FieldIcon><PageIe /></FieldIcon>
            <Address>http://www.forumservices.<b>speed-host.org</b>/forumdisplay.php?fid=2</Address>
            <FieldButton aria-label="Show addresses"><Arrow /></FieldButton>
            <FieldButton $divided aria-label="Refresh">
              <svg width="15" height="15" viewBox="0 0 15 15">
                <path d="M4.500 3V9M1.500 6L4.500 9L7.500 6M4 3L7 1" fill="none" stroke="#4a9ce0" strokeWidth="1.700" />
                <path d="M10.500 12V6M7.500 9L10.500 6L13.500 9M11 12L8 14" fill="none" stroke="#1c58b0" strokeWidth="1.700" />
              </svg>
            </FieldButton>
            <FieldButton $divided aria-label="Stop"><Cross size={13} color="#cc3a38" /></FieldButton>
          </Field>
          <Field $search>
            <FieldIcon><GoogleMark /></FieldIcon>
            <SearchBox placeholder="Google" aria-label="Search the web" />
            <FieldButton aria-label="Search">
              <svg width="14" height="14" viewBox="0 0 14 14">
                <path d="M1 13L6 8" stroke="#2458a8" strokeWidth="2.200" />
                <circle cx="8.500" cy="5" r="3.700" fill="#e4f0fc" stroke="#3c7cc8" strokeWidth="1.600" />
              </svg>
            </FieldButton>
            <FieldButton aria-label="Search options"><Arrow /></FieldButton>
          </Field>
        </NavBar>
      </Glass>
      <ToolBar>
        <Grip />
        <ToolClose aria-label="Close toolbar"><Cross size={9} /></ToolClose>
        <Advisor>
          <svg width="16" height="16" viewBox="0 0 16 16">
            <circle cx="8" cy="8" r="7.300" fill="#f4f4f4" stroke="#777" />
            <path d="M5.500 6Q5.500 3.800 8 3.800T10.500 6Q10.500 7.200 8 8.500V9.500M8 11V12.800" fill="none" stroke="#222" strokeWidth="1.600" />
          </svg>
          <span><b>McAfee</b> SiteAdvisor</span>
        </Advisor>
        <RecentButton aria-label="SiteAdvisor menu"><Arrow /></RecentButton>
      </ToolBar>
      <TabStrip>
        <Favorites>
          <svg width="16" height="16" viewBox="0 0 16 16">
            <path d="M8 0.800L10.200 5.500L15.500 6L11.500 9.700L12.700 15L8 12.200L3.300 15L4.500 9.700L0.500 6L5.800 5.500Z" fill="#fcb82c" stroke="#d88414" />
          </svg>
          Favorites
        </Favorites>
        <QuickTab $width={24} aria-label="Quick tabs">
          <svg width="15" height="13" viewBox="0 0 15 13">
            <path d="M0.500 0.500H6.500V5.500H0.500ZM8.500 0.500H14.500V5.500H8.500ZM0.500 7.500H6.500V12.500H0.500ZM8.500 7.500H14.500V12.500H8.500Z" fill="#f8fafc" stroke="#747c8c" />
          </svg>
        </QuickTab>
        <QuickTab $width={16} aria-label="Tab list"><svg width="5" height="3" viewBox="0 0 5 3"><path d="M0 0H5L2.500 3Z" /></svg></QuickTab>
        <Tab $tone="#90e4c0"><IeLogo /><span>Edit Template</span></Tab>
        <Tab $active $tone="linear-gradient(#74dcae, #b8ecd4 60%, #f2f6f6)">
          <IeLogo />
          <span>Forum Services - Introd...</span>
          <Bare aria-label="Close tab"><Cross size={10} /></Bare>
        </Tab>
        <Tab $tone="linear-gradient(#fff, #e3edf9 40%)"><IeLogo /><span>MyBB - Mods - Submission</span></Tab>
        <QuickTab $width={30} aria-label="New tab" />
      </TabStrip>
    </>
  );
}

function ThreadList() {
  return (
    <ThreadBox>
      <Threads>
        <colgroup>
          <col width="26" />
          <col width="20" />
          <col />
          <col width="71" />
          <col width="71" />
          <col width="84" />
          <col width="202" />
          <col width="26" />
        </colgroup>
        <thead>
          <tr>
            <Th colSpan={3} $align="left">Thread / Author</Th>
            <Th>Replies</Th>
            <Th>Views</Th>
            <Th>Rating</Th>
            <Th $align="right">Last Post [asc]</Th>
            <Th><Tick type="checkbox" aria-label="Select all threads" /></Th>
          </tr>
        </thead>
        <tbody>
          {threads.map((t, i) => (
            <Tr key={t.date} $alt={i === 1}>
              <Td $align="left"><Doc tone={t.unread ? "blue" : "grey"} band={t.unread ? "#6cbcf0" : undefined} dot /></Td>
              <Td />
              <Td $align="left">
                <Subject $unread={t.unread}>
                  {t.unread && (
                    <svg width="12" height="9" viewBox="0 0 12 9"><path d="M1 3H6V0.800L11 4.500L6 8.200V6H1Z" fill="#7cc46c" stroke="#3c8c3c" /></svg>
                  )}
                  <A href="#thread">{t.title}</A>
                </Subject>
                <A href="#author">{t.author}</A>
              </Td>
              <Td $big><A href="#replies">{t.replies}</A></Td>
              <Td $big>{t.views}</Td>
              <Td $align="left"><Stars /></Td>
              <Td $align="right">
                {t.date}<br />
                <A href="#last">Last Post</A>: <A href="#user">{t.last}</A>
              </Td>
              <Td><Tick type="checkbox" aria-label={`Select ${t.title}`} /></Td>
            </Tr>
          ))}
        </tbody>
      </Threads>
      <SortBar>
        <Select id="sort" label="Sort by" value="Sort by: Last Post" width={145} />
        <Select id="order" label="Order" value="Order: Descending" width={129} />
        <Select id="from" label="From" value="From: Today" width={139} />
        <Push type="button" $width={33}>Go</Push>
      </SortBar>
    </ThreadBox>
  );
}

function ForumPage() {
  return (
    <Page>
      <Container>
        <Banner>Cold Blue</Banner>
        <MenuBar>
          {menu.map((m) => (
            <MenuLink key={m.label} href="#menu">{m.icon}{m.label}</MenuLink>
          ))}
        </MenuBar>
        <Welcome>
          <div>
            <p>
              <b>Welcome back, Josherz</b>. You last visited: Today, 02:21 PM (<A href="#usercp"><b>User CP</b></A> — <A href="#modcp">Mod CP</A> — <A href="#admincp">Admin CP</A> — <A href="#logout">Log Out</A>)
            </p>
            <p>
              <A href="#new">View New Posts</A> | <A href="#today">View Today's Posts</A> | <A href="#pm">Private Messages</A> (Unread 0, Total 2)
            </p>
          </div>
          <Right>
            <p><b>Current time:</b> 11-20-2009, 02:38 PM</p>
            <p><A href="#buddies">Open Buddy List</A></p>
          </Right>
        </Welcome>
        <Crumbs>
          <A href="#home">Forum Services</A> / <A href="#welcome">Welcome</A> / Introductions
        </Crumbs>
        <Browsing>User(s) browsing this forum: <i>Josherz</i></Browsing>
        <ActionRow $top={0}><NewThread /></ActionRow>
        <ForumLinks>
          <A href="#mark">Mark this forum read</A>
          <A href="#subscribe">Subscribe to this forum</A>
        </ForumLinks>
        <ThreadList />
        <ActionRow $top={5}><NewThread /></ActionRow>
        <Bottom>
          <Legend>
            {legend.map((l) => (
              <LegendItem key={l.label}>{l.icon}<span>{l.label}</span></LegendItem>
            ))}
          </Legend>
          <Tools>
            <ToolForm>
              <label htmlFor="moderation">Inline Thread Moderation:</label>
              <Select id="moderation" label="Inline Thread Moderation" value="Close Threads" width={150} />
              <Push type="button" $width={52}>Go (0)</Push>
              <Push type="button" $width={47} $gap={5}>Clear</Push>
            </ToolForm>
            <ToolForm>
              <label htmlFor="find">Search this Forum:</label>
              <TextInput id="find" />
              <Push type="button" $width={33}>Go</Push>
            </ToolForm>
            <ToolForm>
              <label htmlFor="jump">Forum Jump:</label>
              <Select id="jump" label="Forum Jump" value="-- Introductions" width={154} />
              <Push type="button" $width={33}>Go</Push>
            </ToolForm>
          </Tools>
        </Bottom>
      </Container>
    </Page>
  );
}

function ScrollBar() {
  return (
    <Scroll>
      <ScrollArrow aria-label="Scroll up"><svg width="7" height="4" viewBox="0 0 7 4"><path d="M0 4H7L3.500 0Z" fill="#444" /></svg></ScrollArrow>
      <Thumb>
        <svg width="7" height="8" viewBox="0 0 7 8"><path d="M0 1H7M0 4H7M0 7H7" stroke="#555" /></svg>
      </Thumb>
      <Rest />
      <ScrollArrow aria-label="Scroll down"><Arrow color="#444" /></ScrollArrow>
    </Scroll>
  );
}

function Taskbar() {
  return (
    <TaskBar>
      <StartButton aria-label="Start"><WindowsOrb /></StartButton>
      <RunningApp aria-label="Internet Explorer"><IeLogo size={32} /></RunningApp>
      <PinnedApp aria-label="Explorer"><Folder /></PinnedApp>
      <PinnedApp aria-label="Messenger"><Messenger /></PinnedApp>
      <PinnedApp aria-label="Media Player"><MediaPlayer /></PinnedApp>
      <PinnedApp aria-label="Firefox"><Firefox /></PinnedApp>
      <Tray>
        <Lang>EN</Lang>
        <TrayIcon aria-label="Show hidden icons"><svg width="7" height="4" viewBox="0 0 7 4"><path d="M0 4H7L3.500 0Z" fill="#fff" /></svg></TrayIcon>
        <TrayIcon aria-label="Info"><LetterBall letter="i" italic /></TrayIcon>
        <TrayIcon aria-label="Avast"><LetterBall letter="a" /></TrayIcon>
        <TrayIcon aria-label="McAfee">
          <svg width="16" height="16" viewBox="0 0 16 16">
            <rect x="0.500" y="0.500" width="15" height="15" rx="3" fill="#c01828" stroke="#e8c8cc" />
            <path d="M3.500 13V3.500L8 9L12.500 3.500V13" fill="none" stroke="#fff" strokeWidth="2.200" />
          </svg>
        </TrayIcon>
        <TrayIcon aria-label="Eject media">
          <svg width="17" height="16" viewBox="0 0 17 16">
            <circle cx="7" cy="7" r="6.500" fill="#e4ece4" stroke="#9ab" />
            <path d="M7 7L1 4A6.500 6.500 0 0 1 5 1Z" fill="#8ccc6c" />
            <circle cx="7" cy="7" r="1.500" fill="#456" />
            <rect x="6.500" y="7" width="10" height="9" fill="#f4f4e4" stroke="#889" strokeWidth="0.600" />
            <path d="M8 12L11.500 8L15 12ZM8 13H15V14.500H8Z" fill="#5ca81c" />
          </svg>
        </TrayIcon>
        <TrayIcon aria-label="Network">
          <svg width="16" height="16" viewBox="0 0 16 16">
            <rect x="4.500" y="4.500" width="11" height="8" fill="#1c4c84" stroke="#fff" />
            <path d="M7 15H13M10 13V15M1 1V4H5V1M3 4V12H5" fill="none" stroke="#fff" strokeWidth="1.200" />
          </svg>
        </TrayIcon>
        <TrayIcon aria-label="Volume">
          <svg width="16" height="14" viewBox="0 0 16 14">
            <path d="M0.500 4.500H3L7 1V13L3 9.500H0.500Z" fill="#fff" />
            <path d="M9 4.500Q10.500 7 9 9.500M11 3Q13.500 7 11 11M13 1.500Q16.500 7 13 12.500" fill="none" stroke="#fff" />
          </svg>
        </TrayIcon>
        <Clock>14:37<br />20/11/2009</Clock>
        <PeekButton aria-label="Show desktop" />
      </Tray>
    </TaskBar>
  );
}

export default function App() {
  return (
    <>
      <Global />
      <Desktop>
        <BrowserChrome />
        <Viewport>
          <ForumPage />
          <ScrollBar />
        </Viewport>
        <Taskbar />
      </Desktop>
    </>
  );
}
